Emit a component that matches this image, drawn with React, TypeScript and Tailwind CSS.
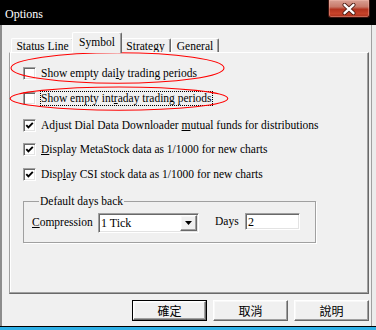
import React from "react";

const raised =
  "border-t border-l border-t-white border-l-white border-r border-b border-r-[#696969] border-b-[#696969] shadow-[inset_-1px_-1px_#a0a0a0,inset_1px_1px_#f8f8f8]";
const sunken =
  "border-t border-l border-t-[#a0a0a0] border-l-[#a0a0a0] border-r border-b border-r-white border-b-white shadow-[inset_1px_1px_#696969,inset_-1px_-1px_#e3e3e3]";

function Check({ checked }: { checked: boolean }) {
  return (
    <div className={`w-[13px] h-[13px] bg-white flex items-center justify-center shrink-0 ${sunken}`}>
      {checked && (
        <svg width="9" height="9" viewBox="0 0 9 9">
          <path d="M1.3 4.2 L3.4 6.4 L7.8 1.8" fill="none" stroke="#000" strokeWidth="1.9" />
        </svg>
      )}
    </div>
  );
}

function Row({
  checked,
  children,
  focus,
  mt,
}: {
  checked: boolean;
  children: React.ReactNode;
  focus?: boolean;
  mt: string;
}) {
  return (
    <div className={`flex items-center h-[13px] ${mt}`}>
      <Check checked={checked} />
      <div
        className={`ml-[4px] px-0 leading-[13px] whitespace-nowrap border ${
          focus ? "border-dotted border-black" : "border-transparent"
        }`}
      >
        {children}
      </div>
    </div>
  );
}

function Tab({ label, w, selected }: { label: string; w: string; selected?: boolean }) {
  if (selected) {
    return (
      <div
        className={`relative z-10 -mx-[2px] -mb-[1px] h-[21px] bg-[#f0f0f0] rounded-t-[2px] border-t border-l border-t-white border-l-white border-r border-r-[#696969] shadow-[inset_-1px_0_#a0a0a0] flex justify-center pt-[2px] ${w}`}
      >
        <span className="leading-[14px]">{label}</span>
      </div>
    );
  }
  return (
    <div
      className={`h-[14px] rounded-t-[2px] border-t border-l border-t-white border-l-white border-r border-r-[#696969] shadow-[inset_-1px_0_#a0a0a0] flex justify-center pt-[0px] ${w}`}
    >
      <span className="leading-[14px]">{label}</span>
    </div>
  );
}

function Button({ label, def }: { label: string; def?: boolean }) {
  const inner = (
    <div
      className={`w-full h-full flex items-center justify-center bg-[#f0f0f0] ${raised} font-['Noto_Sans_CJK_TC','Noto_Sans_CJK_SC',sans-serif] text-[12px] leading-none`}
    >
      {label}
    </div>
  );
  if (def) {
    return <div className="w-[75px] h-[21px] border border-black">{inner}</div>;
  }
  return <div className="w-[75px] h-[21px]">{inner}</div>;
}

export default function App() {
  return (
    <div className="relative w-[376px] h-[330px] bg-black overflow-hidden flex flex-col font-['Liberation_Serif',serif] text-[11.5px] text-black">
      {/* Title bar */}
      <div className="h-[25px] flex items-start shrink-0">
        <div className="pl-[5px] pt-[7px] text-white text-[12px] leading-[14px]">Options</div>
        <div className="ml-auto mr-[6px] w-[42px] h-[18px] rounded-b-[3px] border border-[#3b1510] border-t-0 bg-[linear-gradient(180deg,#d9a094_0%,#c87a6a_40%,#b3331f_55%,#c7432a_80%,#a9301c_100%)] flex items-center justify-center shadow-[inset_0_0_0_1px_rgba(255,200,190,0.35)]">
          <svg width="16" height="12" viewBox="0 0 16 12">
            <path d="M3.5 1.8 L12.5 10.2 M12.5 1.8 L3.5 10.2" stroke="#4a1a12" strokeWidth="4" strokeLinecap="round" />
            <path d="M3.5 1.8 L12.5 10.2 M12.5 1.8 L3.5 10.2" stroke="#ffffff" strokeWidth="2.3" strokeLinecap="round" />
          </svg>
        </div>
      </div>

      {/* Window body */}
      <div className="flex h-[301px] bg-[#ececec] shrink-0">
        <div className="w-[372px] h-full flex flex-col bg-[#f0f0f0] border-l-2 border-l-[#8c8c8c] border-r border-r-[#a0a0a0]">
          {/* Tabs */}
          <div className="mt-[7px] ml-[9px] h-[20px] flex items-end">
            <Tab label="Status Line" w="w-[63px]" />
            <Tab label="Symbol" w="w-[50px]" selected />
            <Tab label="Strategy" w="w-[51px]" />
            <Tab label="General" w="w-[48px]" />
          </div>

          {/* Panel */}
          <div className="ml-[7px] w-[360px] h-[242px] flex flex-col pl-[13px] border-t border-t-white border-l border-l-[#a0a0a0] border-r border-r-[#696969] border-b border-b-[#696969] shadow-[inset_-1px_-1px_#a0a0a0,inset_1px_0_#ffffff]">
            <Row checked={false} mt="mt-[14px]">
              Show empty dai<span className="underline">l</span>y trading periods
            </Row>
            <Row checked={false} focus mt="mt-[12px]">
              Show empty int<span className="underline">r</span>aday trading periods
            </Row>
            <Row checked mt="mt-[14px]">
              Adjust Dial Data Downloader <span className="underline">m</span>utual funds for distributions
            </Row>
            <Row checked mt="mt-[11px]">
              <span className="underline">D</span>isplay MetaStock data as 1/1000 for new charts
            </Row>
            <Row checked mt="mt-[12px]">
              Disp<span className="underline">l</span>ay CSI stock data as 1/1000 for new charts
            </Row>

            {/* Group box */}
            <fieldset className="mt-[13px] w-[293px] border border-[#a0a0a0] shadow-[1px_1px_#ffffff] pl-[8px] pb-[9px]">
              <legend className="ml-[7px] px-[1px] leading-[14px]">Default days back</legend>
              <div className="flex items-start mt-[5px]">
                <div className="w-[66px] h-[20px] flex items-center whitespace-nowrap">
                  <span>
                    <span className="underline">C</span>ompression
                  </span>
                </div>
                <div className={`w-[101px] h-[20px] bg-white flex items-center ${sunken}`}>
                  <span className="pl-[2px] flex-1 leading-[14px] text-[12px]">1 Tick</span>
                  <div
                    className={`w-[17px] h-[16px] mr-[1px] bg-[#f0f0f0] flex items-center justify-center ${raised}`}
                  >
                    <svg width="7" height="4" viewBox="0 0 7 4">
                      <path d="M0 0 H7 L3.5 4 Z" fill="#000" />
                    </svg>
                  </div>
                </div>
                <div className="ml-[16px] w-[30px] h-[17px] flex items-center">Days</div>
                <div className={`w-[55px] h-[17px] bg-white flex items-center pl-[2px] ${sunken}`}>
                  <span className="leading-[14px] text-[12px]">2</span>
                </div>
              </div>
            </fieldset>
          </div>

          {/* Buttons */}
          <div className="mt-[6px] flex justify-end gap-[6px] pr-[2px]">
            <Button label="確定" def />
            <Button label="取消" />
            <Button label="說明" />
          </div>
        </div>
        <div className="flex-1" />
      </div>

      <div className="h-px bg-black shrink-0" />
      <div className="h-[3px] bg-[#2fb0e6] shrink-0" />

      {/* Red annotation ellipses */}
      <svg
        className="absolute left-0 top-0 pointer-events-none"
        width="376"
        height="330"
        viewBox="0 0 376 330"
      >
        <ellipse cx="117.5" cy="68" rx="106.5" ry="15.3" fill="none" stroke="#ff0000" strokeWidth="1.1" />
        <ellipse cx="119" cy="98.6" rx="108.8" ry="11.6" fill="none" stroke="#ff0000" strokeWidth="1.1" />
      </svg>
    </div>
  );
}
